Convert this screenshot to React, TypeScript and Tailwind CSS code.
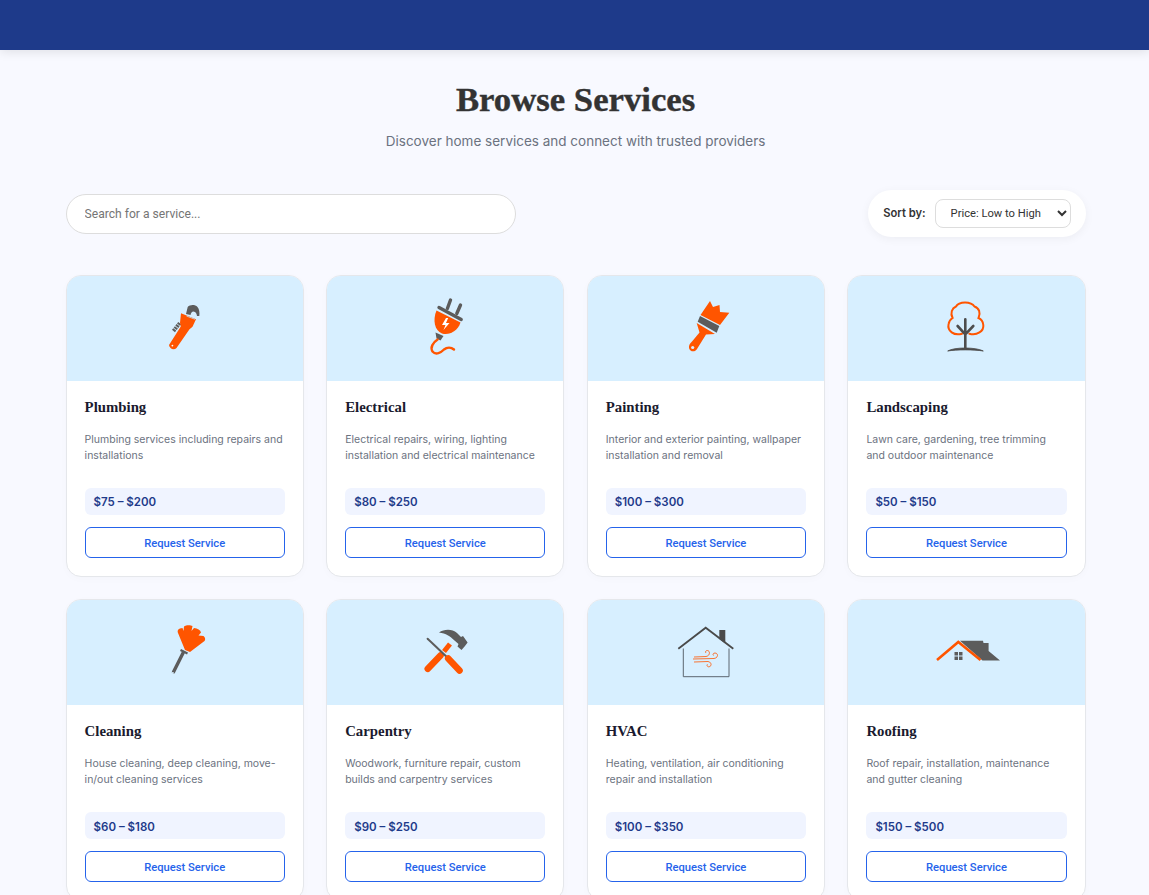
import { ReactNode } from "react";

const ORANGE = "#ff5500";
const GREY = "#5c5c5c";

const icons: Record<string, ReactNode> = {
  wrench: (
    <>
      <path d="M33 17 L34.7 10 C37 7.5 42 7.3 44.5 10 C46.3 12 46.8 15.5 46.3 19 L44 19 C43.7 16.5 42.5 14.8 40.5 14.6 C38.8 14.6 38 15.8 37.5 18 Z" fill={GREY} />
      <path d="M20.5 34 L27 25.7" stroke={GREY} strokeWidth="3.8" strokeDasharray="2 0.7" />
      <path d="M28 16.3 L43 22.3 L39.5 29.7 L36.5 32.3 L23.5 51 C21 53.5 16.5 52 16 48 L27.8 29.5 L27 25.7 Z" fill={ORANGE} />
      <circle cx="19.4" cy="48.6" r="0.9" fill="#fff" />
      <path d="M33.5 19 L42 22.3" stroke="#c9c9c9" strokeWidth="1" />
    </>
  ),
  plug: (
    <>
      <path d="M37.5 3 L34.4 11.5 M47.5 8 L43.8 16.5" stroke={GREY} strokeWidth="3.4" strokeLinecap="round" />
      <path d="M23.5 13.5 L47.5 25.5 C44.5 34.5 36 38.5 29 36.5 C21.5 33.5 19.5 23 23.5 13.5 Z" fill={ORANGE} />
      <path d="M26 10.5 L48.2 22.5" stroke={GREY} strokeWidth="3.4" strokeLinecap="round" />
      <path d="M33 21 L29 28 L32.5 28 L30.5 33 L36.5 26 L33 26 L35.2 21 Z" fill="#fff" />
      <path d="M22.5 35.5 L30.5 39 L27.5 43.5 L23.5 41.5 Z" fill={GREY} />
      <path d="M24.6 42.5 C20 45.5 17 50.5 19.5 54.5 C23 58.5 28 55.5 31 52.5 C34 50 38 50 41 52.5" fill="none" stroke={ORANGE} strokeWidth="2.4" strokeLinecap="round" />
    </>
  ),
  brush: (
    <>
      <path d="M36 4 L39 10 L45.5 8 L46 15 L55.3 15.7 L46 28 L26.5 18 Z" fill={ORANGE} />
      <path d="M26 19 L45.3 29 L42.7 35.7 L23.7 24.7 Z" fill={GREY} />
      <path d="M22.7 26 L41 37 L32 37.5 L23 52 C21 55.5 16 55 15 51 C14.5 48.5 16 46.5 18 44.5 L25.5 35.5 Z" fill={ORANGE} />
      <circle cx="18.7" cy="50.5" r="1.6" fill="#d7efff" />
    </>
  ),
  tree: (
    <>
      <path d="M28 36.7 C20 39 13 34 14.6 27 C15 24 17 22 18.6 21 C16 16 18 11 22 9.5 C25 4 37 4 40.5 9.5 C45 11 47 16 44.5 21 C47 22 49 25 49.3 28 C50 34 43 39 35.3 36.7" fill="none" stroke={ORANGE} strokeWidth="2" strokeLinecap="round" />
      <path d="M31.3 22.3 L31.3 51 M23.6 29 L31.3 37.3 M39.3 29 L31.3 37.3" stroke="#4d4d4d" strokeWidth="2.6" strokeLinecap="round" />
      <path d="M13.7 54 C20 50 42 50 49.3 54 C40 52.5 22 52.5 13.7 54 Z" fill="#4d4d4d" stroke="#4d4d4d" strokeWidth="0.8" />
    </>
  ),
  duster: (
    <>
      <path d="M32 29 L25 12 C24 9 25.5 7.5 29.5 7 L30.5 10 L31 5.5 C33 4 37.5 4 39.5 5 L38.5 10 L41 7 C44.5 7.5 47.5 9 48 11.5 L45.5 14.5 L50.5 15 C52.5 16.5 52.5 19 51.5 20 L37 31 Z" fill={ORANGE} />
      <path d="M27.5 29 L34.5 32.5" stroke={GREY} strokeWidth="2.2" />
      <path d="M30.3 31.5 L20.5 51" stroke={GREY} strokeWidth="3.4" strokeLinecap="round" />
      <circle cx="19.9" cy="52" r="1" fill="#d7efff" />
    </>
  ),
  tools: (
    <>
      <path d="M37 23 L31 30.5" stroke={ORANGE} strokeWidth="5" />
      <path d="M27.5 34.5 L14.8 47.8" stroke={ORANGE} strokeWidth="6.6" strokeLinecap="round" />
      <path d="M26 11.5 C31 8 39 7.5 44 12 L48 16 L50 15 L54.6 21.5 L52 25 L48.5 29 L44.5 25.5 L45.5 23 L41.5 19.5 C37 15 33 12.5 26 11.5 Z" fill={GREY} />
      <path d="M14.6 17.7 L33.6 35.7" stroke={GREY} strokeWidth="2" strokeLinecap="round" />
      <path d="M35.2 37.5 L46.5 49.5" stroke={ORANGE} strokeWidth="6.6" strokeLinecap="round" />
    </>
  ),
  hvac: (
    <>
      <path d="M45.3 9 L51.3 9 L51.3 22.5 L45.3 18 Z" fill="#4a4a4a" />
      <path d="M4.3 27.7 L31.7 6.7 L59.3 27.7" fill="none" stroke="#4a4a4a" strokeWidth="1.8" />
      <path d="M9.3 27.5 L9.3 55.7 L55 55.7 L55 27.5" fill="none" stroke="#5c6670" strokeWidth="1" />
      <path d="M20 36 L32 35.5 C36 35 36.5 30 33.5 29.5 C31.5 29.5 31 31 32 32 M19 38 L40 37.5 C44.5 37 44.5 32 41 32 C39 32 38.5 33.8 39.5 34.5 M20 41 L34 40.5 C38 41 38 46 34.5 45.8 C33 45.5 32.5 44 33.5 43.3" fill="none" stroke={ORANGE} strokeWidth="0.8" />
    </>
  ),
  roof: (
    <>
      <path d="M26 19.7 L49 19.7 L49.5 22 L54.6 22 L54.6 30 L66 39.5 L48.5 39.5 Z" fill={GREY} />
      <path d="M3 39 L24.3 21 L46.5 39" fill="none" stroke={ORANGE} strokeWidth="2.6" />
      <path d="M20.5 31 H24 V34.6 H20.5 Z M25 31 H28.5 V34.6 H25 Z M20.5 35.4 H24 V39 H20.5 Z M25 35.4 H28.5 V39 H25 Z" fill={GREY} />
    </>
  ),
};

const services = [
  { name: "Plumbing", desc: "Plumbing services including repairs and installations", price: "$75 – $200", icon: "wrench" },
  { name: "Electrical", desc: "Electrical repairs, wiring, lighting installation and electrical maintenance", price: "$80 – $250", icon: "plug" },
  { name: "Painting", desc: "Interior and exterior painting, wallpaper installation and removal", price: "$100 – $300", icon: "brush" },
  { name: "Landscaping", desc: "Lawn care, gardening, tree trimming and outdoor maintenance", price: "$50 – $150", icon: "tree" },
  { name: "Cleaning", desc: "House cleaning, deep cleaning, move-in/out cleaning services", price: "$60 – $180", icon: "duster" },
  { name: "Carpentry", desc: "Woodwork, furniture repair, custom builds and carpentry services", price: "$90 – $250", icon: "tools" },
  { name: "HVAC", desc: "Heating, ventilation, air conditioning repair and installation", price: "$100 – $350", icon: "hvac" },
  { name: "Roofing", desc: "Roof repair, installation, maintenance and gutter cleaning", price: "$150 – $500", icon: "roof" },
];

export default function App() {
  return (
    <div className="min-h-screen bg-[#f8f9ff] font-['Inter',sans-serif]">
      <header className="h-[50px] bg-[#1e3a8a] shadow-[0_2px_10px_rgba(0,0,0,0.1)]" />

      <main className="ml-[65.6px] w-[1020px] pb-10">
        <div className="pt-[30px] text-center">
          <h1 className="font-['Liberation_Serif',serif] text-[34.7px] leading-[39px] font-bold text-[#333333] [-webkit-text-stroke:0.4px_#333333]">
            Browse Services
          </h1>
          <p className="mt-[11px] text-[13.5px] leading-[22px] text-[#6b7280]">
            Discover home services and connect with trusted providers
          </p>
        </div>

        <div className="mt-[38px] flex items-center justify-between">
          <input
            type="text"
            placeholder="Search for a service..."
            className="h-10 w-[450px] rounded-[20px] border border-[#dddddd] bg-white px-[18px] font-['Roboto',sans-serif] text-[12.1px] text-[#333333] outline-none placeholder:text-[#757575]"
          />
          <div className="flex h-[47px] items-center gap-[9px] rounded-[24px] bg-white px-[15px] shadow-[0_2px_10px_rgba(0,0,0,0.05)]">
            <label className="text-[11.2px] font-semibold text-[#333333]">Sort by:</label>
            <select className="h-[29px] w-[136px] rounded-lg border border-[#dddddd] bg-white pl-[11px] font-['Roboto',sans-serif] text-[11.2px] text-[#333333] outline-none">
              <option>Price: Low to High</option>
              <option>Price: High to Low</option>
            </select>
          </div>
        </div>

        <div className="mt-[38px] grid grid-cols-4 gap-[22.4px]">
          {services.map((s) => (
            <div
              key={s.name}
              className="flex h-[302px] flex-col overflow-hidden rounded-[15px] border border-[#e5e7eb] bg-white shadow-[0_2px_8px_rgba(0,0,0,0.02)]"
            >
              <div className="flex h-[105px] items-center justify-center bg-[#d7efff]">
                <svg width="64" height="64" viewBox="0 0 64 64" className="overflow-visible">
                  {icons[s.icon]}
                </svg>
              </div>
              <div className="flex flex-1 flex-col px-[18px] pt-[17px] pb-[18px]">
                <h3 className="font-['Liberation_Serif',serif] text-[14.8px] leading-[18px] font-bold text-[#1a1a2e]">
                  {s.name}
                </h3>
                <p className="mt-[16px] h-8 text-[10.5px] leading-4 text-[#6b7280]">{s.desc}</p>
                <div className="mt-auto flex h-[27px] items-center rounded-md bg-[#f0f4ff] px-[9px] pt-[3px] text-[11.5px] font-semibold text-[#1e3a8a]">
                  {s.price}
                </div>
                <button className="mt-[12px] h-[31px] rounded-md border border-[#2563eb] bg-white pt-[4px] font-['Roboto',sans-serif] text-[11.2px] font-medium text-[#2563eb]">
                  Request Service
                </button>
              </div>
            </div>
          ))}
        </div>
      </main>
    </div>
  );
}
